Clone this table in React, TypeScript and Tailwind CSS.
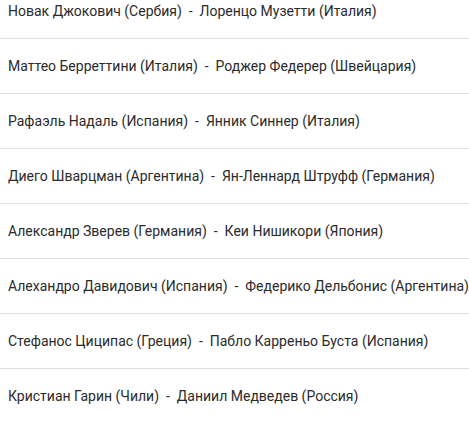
import React from 'react';

const matches = [
  ['Новак Джокович (Сербия)', 'Лоренцо Музетти (Италия)'],
  ['Маттео Берреттини (Италия)', 'Роджер Федерер (Швейцария)'],
  ['Рафаэль Надаль (Испания)', 'Янник Синнер (Италия)'],
  ['Диего Шварцман (Аргентина)', 'Ян-Леннард Штруфф (Германия)'],
  ['Александр Зверев (Германия)', 'Кеи Нишикори (Япония)'],
  ['Алехандро Давидович (Испания)', 'Федерико Дельбонис (Аргентина)'],
  ['Стефанос Циципас (Греция)', 'Пабло Карреньо Буста (Испания)'],
  ['Кристиан Гарин (Чили)', 'Даниил Медведев (Россия)'],
];

const App = () => {
  return (
    <div className="w-[469px] h-[421px] overflow-hidden bg-white">
      <ul className="-mt-[16px]">
        {matches.map((m, i) => (
          <li
            key={i}
            className="border-b border-[#dcdde3] px-[8px] py-[17px] text-[14px] leading-[20px] text-[#2b2b2b] whitespace-nowrap"
            style={{ fontFamily: 'Roboto, sans-serif' }}
          >
            {m[0]}&nbsp; -&nbsp; {m[1]}
          </li>
        ))}
      </ul>
    </div>
  );
};

export default App;
